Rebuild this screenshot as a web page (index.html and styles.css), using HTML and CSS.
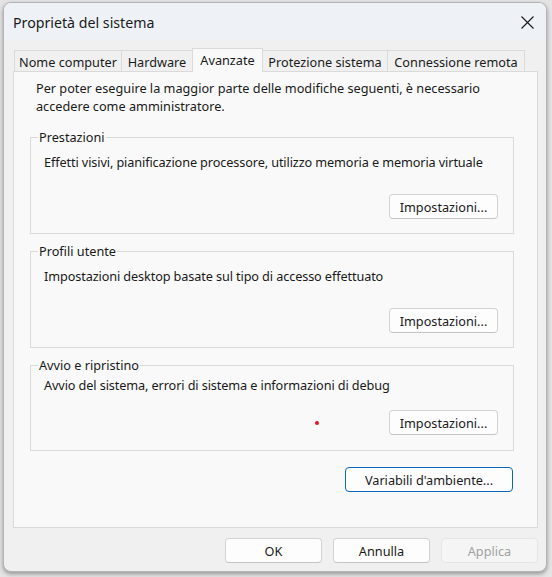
FILE: index.html
```html
<!DOCTYPE html>
<html lang="it">
<head>
<meta charset="utf-8">
<title>Proprietà del sistema</title>
<link rel="stylesheet" href="styles.css">
</head>
<body>
<div class="window">
  <div class="titlebar">
    <span class="title">Proprietà del sistema</span>
    <span class="close" aria-label="Chiudi">
      <svg width="13" height="13" viewBox="0 0 13 13"><path d="M0.5 0.5 L12.5 12.5 M12.5 0.5 L0.5 12.5" stroke="#1a1a1a" stroke-width="1.1" fill="none"/></svg>
    </span>
  </div>
  <div class="body">
    <div class="tabs">
      <div class="tab t1">Nome computer</div>
      <div class="tab t2">Hardware</div>
      <div class="tab t3 selected">Avanzate</div>
      <div class="tab t4">Protezione sistema</div>
      <div class="tab t5">Connessione remota</div>
    </div>
    <div class="panel">
      <p class="intro"><span class="line">Per poter eseguire la maggior parte delle modifiche seguenti, è necessario</span><span class="line">accedere come amministratore.</span></p>
      <fieldset class="group g1">
        <legend>Prestazioni</legend>
        <p class="desc">Effetti visivi, pianificazione processore, utilizzo memoria e memoria virtuale</p>
        <div class="actions"><button class="btn set">Impostazioni...</button></div>
      </fieldset>
      <fieldset class="group g2">
        <legend>Profili utente</legend>
        <p class="desc">Impostazioni desktop basate sul tipo di accesso effettuato</p>
        <div class="actions"><button class="btn set">Impostazioni...</button></div>
      </fieldset>
      <fieldset class="group g3">
        <legend>Avvio e ripristino</legend>
        <p class="desc">Avvio del sistema, errori di sistema e informazioni di debug</p>
        <div class="actions"><span class="dot"></span><button class="btn set">Impostazioni...</button></div>
      </fieldset>
      <div class="env"><button class="btn primary">Variabili d'ambiente...</button></div>
    </div>
    <div class="footer">
      <button class="btn foot">OK</button>
      <button class="btn foot">Annulla</button>
      <button class="btn foot disabled">Applica</button>
    </div>
  </div>
</div>
</body>
</html>
```

FILE: styles.css
```css
* { box-sizing: border-box; }
html, body { margin: 0; padding: 0; }
body {
  width: 552px;
  height: 577px;
  background: #e4e4e4;
  font-family: "Noto Sans", "Open Sans", sans-serif;
  font-size: 12.7px;
  color: #1a1a1a;
  padding: 2px 0 0 3px;
}
.window {
  width: 544px;
  height: 570px;
  border: 1px solid #b4b4b4;
  border-radius: 8px;
  overflow: hidden;
  background: #f0f0f0;
  display: flex;
  flex-direction: column;
  box-shadow: 0 2px 4px rgba(0,0,0,0.35);
}
.titlebar {
  height: 37px;
  flex: none;
  background: #eef2f7;
  display: flex;
  align-items: center;
  justify-content: space-between;
  padding: 0 12px 0 9px;
}
.title { font-size: 14.2px; color: #1a1a1a; padding-top: 1px; }
.close { display: flex; width: 13px; height: 13px; margin-top: 1px; }
.body {
  flex: 1;
  display: flex;
  flex-direction: column;
  padding: 8px 8px 8px 9px;
}
.tabs {
  display: flex;
  align-items: flex-end;
  height: 24px;
  margin-bottom: -1px;
  padding-left: 1px;
}
.tab {
  height: 22px;
  border: 1px solid #dadada;
  border-bottom: none;
  background: #f0f0f0;
  display: flex;
  align-items: center;
  justify-content: center;
  white-space: nowrap;
  margin-right: -1px;
  line-height: 16px;
}
.tab.selected {
  height: 24px;
  background: #f9f9f9;
  position: relative;
  z-index: 1;
  padding-bottom: 2px;
}
.t1 { width: 108px; }
.t2 { width: 72px; }
.t3 { width: 71px; }
.t4 { width: 126px; }
.t5 { width: 138px; }
.panel {
  height: 457px;
  flex: none;
  width: 525px;
  border: 1px solid #dadada;
  background: #f9f9f9;
  padding: 8px 23px 0 16px;
  display: flex;
  flex-direction: column;
}
.intro {
  margin: 0 0 14px 0;
  padding-left: 6px;
  display: flex;
  flex-direction: column;
}
.intro .line { display: block; height: 17.5px; line-height: 17.5px; white-space: nowrap; }
.group {
  margin: 0 0 9px 0;
  padding: 0 15px 14px 13px;
  border: 1px solid #dadada;
  min-width: 0;
}
.group legend {
  margin-left: -6px;
  padding: 0 1px;
  line-height: 16px;
}
.desc { margin: 9px 0 0 0; line-height: 16px; white-space: nowrap; letter-spacing: -0.11px; }
.actions {
  display: flex;
  justify-content: flex-end;
  margin-top: 24px;
  position: relative;
}
.g3 { padding-bottom: 15px; }
.g3 .desc { margin-top: 4px; }
.g3 .actions { margin-top: 17px; }
.btn {
  font-family: inherit;
  font-size: 12.7px;
  color: #1a1a1a;
  background: #fdfdfd;
  border: 1px solid #d3d3d3;
  border-bottom-color: #c4c4c4;
  border-radius: 4px;
  height: 25px;
  padding: 0;
  line-height: 16px;
}
.set { width: 109px; }
.dot {
  position: absolute;
  left: 271px;
  top: 11px;
  width: 4px;
  height: 4px;
  border-radius: 50%;
  background: #e21b1b;
}
.env {
  display: flex;
  justify-content: flex-end;
  margin-top: 7px;
  padding-right: 1px;
}
.primary {
  width: 168px;
  border: 1px solid #0a67bd;
}
.footer {
  display: flex;
  justify-content: flex-end;
  gap: 11px;
  margin-top: 10px;
}
.foot { width: 97px; }
.disabled {
  background: #f5f5f5;
  border-color: #e5e5e5;
  color: #a2a2a2;
}
```
